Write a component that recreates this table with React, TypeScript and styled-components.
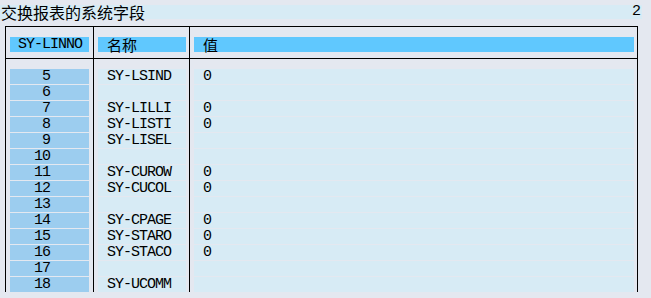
import React from "react";
import styled, { createGlobalStyle } from "styled-components";

const Global = createGlobalStyle`
  html, body { margin: 0; padding: 0; background: #e4e8f0; }
  body { width: 651px; height: 298px; overflow: hidden; }
`;

const MONO = `"Liberation Mono", "Noto Sans CJK SC", monospace`;
const CJK = `"Noto Sans CJK SC", "Liberation Mono", sans-serif`;

const Page = styled.div`
  padding-top: 5px;
  background: #e4e8f0;
  height: 298px;
  box-sizing: border-box;
`;

const TitleBar = styled.div`
  width: 642px;
  height: 14px;
  background: #d7ebf5;
  display: flex;
  align-items: center;
  justify-content: space-between;
`;

const TitleText = styled.span`
  font-family: ${CJK};
  font-size: 16px;
  line-height: 14px;
  color: #000;
  padding-left: 1px;
`;

const PageNo = styled.span`
  font-family: ${MONO};
  font-size: 15px;
  line-height: 14px;
  color: #000;
  padding-right: 1px;
`;

const Frame = styled.div`
  margin: 7px 0 0 5px;
  width: 633px;
  height: 266px;
  box-sizing: border-box;
  border: 1px solid #000;
  border-bottom: none;
  overflow: hidden;
`;

const Section = styled.div<{ $head?: boolean }>`
  display: grid;
  grid-template-columns: 88px 96px 1fr;
  border-bottom: ${(p) => (p.$head ? "1px solid #000" : "none")};
`;

const Column = styled.div<{ $head?: boolean; $last?: boolean; $first?: boolean }>`
  display: flex;
  flex-direction: column;
  gap: 1px;
  padding: 10px ${(p) => (p.$first ? "4px" : "3px")} ${(p) => (p.$head ? "6px" : "0")} 4px;
  border-right: ${(p) => (p.$last ? "none" : "1px solid #000")};
  height: ${(p) => (p.$head ? "auto" : "233px")};
  box-sizing: border-box;
`;

type Kind = "head" | "num" | "plain";

const Cell = styled.div<{ $kind: Kind; $align?: "left" | "right" | "center" }>`
  height: 15px;
  flex: none;
  background: ${(p) =>
    p.$kind === "head" ? "#60c8fe" : p.$kind === "num" ? "#9ccdef" : "#d7ebf5"};
  font-family: ${MONO};
  font-size: 15px;
  letter-spacing: -1px;
  line-height: 15px;
  color: #000;
  white-space: pre;
  text-align: ${(p) => p.$align || "left"};
  padding: ${(p) =>
    p.$align === "right" ? "0 39px 0 0" : p.$align === "center" ? "0 0 0 1px" : "0 0 0 9px"};
  box-sizing: border-box;
`;

const HeadLabel = styled.span`
  display: inline-block;
  vertical-align: top;
  font-family: ${CJK};
  font-size: 15px;
  letter-spacing: 0;
  line-height: 15px;
  height: 15px;
`;

const rows: { n: number; name: string; value: string }[] = [
  { n: 5, name: "SY-LSIND", value: "0" },
  { n: 6, name: "", value: "" },
  { n: 7, name: "SY-LILLI", value: "0" },
  { n: 8, name: "SY-LISTI", value: "0" },
  { n: 9, name: "SY-LISEL", value: "" },
  { n: 10, name: "", value: "" },
  { n: 11, name: "SY-CUROW", value: "0" },
  { n: 12, name: "SY-CUCOL", value: "0" },
  { n: 13, name: "", value: "" },
  { n: 14, name: "SY-CPAGE", value: "0" },
  { n: 15, name: "SY-STARO", value: "0" },
  { n: 16, name: "SY-STACO", value: "0" },
  { n: 17, name: "", value: "" },
  { n: 18, name: "SY-UCOMM", value: "" },
];

export default function App() {
  return (
    <Page>
      <Global />
      <TitleBar>
        <TitleText>交换报表的系统字段</TitleText>
        <PageNo>2</PageNo>
      </TitleBar>
      <Frame>
        <Section $head>
          <Column $head $first>
            <Cell $kind="head" $align="center">SY-LINNO</Cell>
          </Column>
          <Column $head>
            <Cell $kind="head">
              <HeadLabel>名称</HeadLabel>
            </Cell>
          </Column>
          <Column $head $last>
            <Cell $kind="head">
              <HeadLabel>值</HeadLabel>
            </Cell>
          </Column>
        </Section>
        <Section>
          <Column $first>
            {rows.map((r) => (
              <Cell key={r.n} $kind="num" $align="right">
                {String(r.n)}
              </Cell>
            ))}
          </Column>
          <Column>
            {rows.map((r) => (
              <Cell key={r.n} $kind="plain">
                {r.name}
              </Cell>
            ))}
          </Column>
          <Column $last>
            {rows.map((r) => (
              <Cell key={r.n} $kind="plain">
                {r.value}
              </Cell>
            ))}
          </Column>
        </Section>
      </Frame>
    </Page>
  );
}
